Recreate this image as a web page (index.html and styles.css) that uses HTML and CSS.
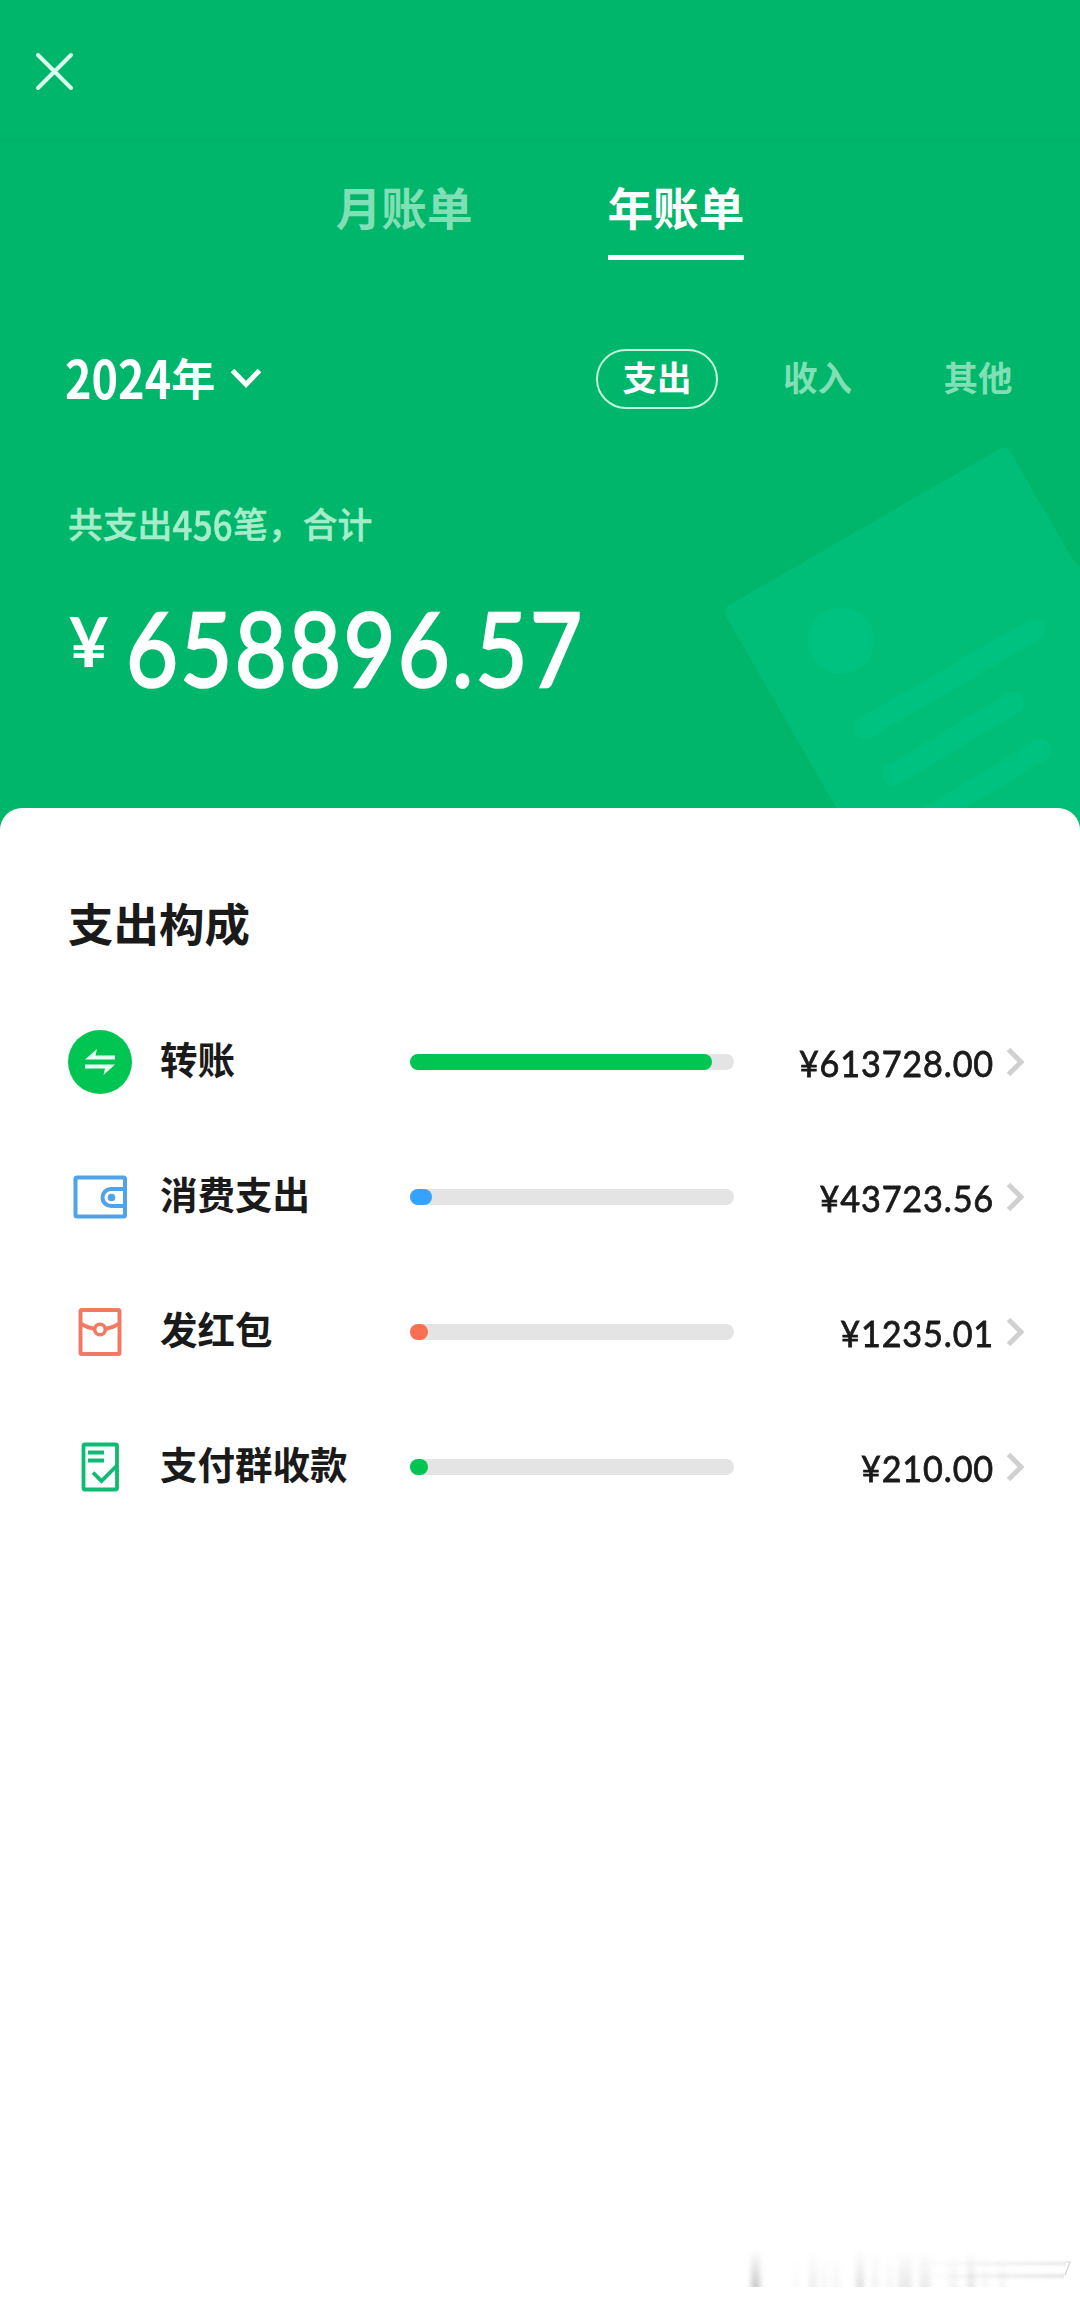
FILE: index.html
```html
<!DOCTYPE html>
<html lang="zh-CN">
<head>
    <meta charset="UTF-8">
    <title>年账单</title>
    <link rel="stylesheet" href="styles.css">
</head>
<body>
<div class="page">
    <div class="top">
        <svg class="top_bg" width="380" height="400" viewBox="700 430 380 400">
            <path fill="#00bd77" d="M729 605 L1001 448 Q1007 446 1010 451 L1073 560 L1090 577 V830 H849 L727 618 Q723 609 729 605Z"/>
            <circle cx="841" cy="640.5" r="33.5" fill="#00c280"/>
            <g stroke="#00c280" stroke-width="22" stroke-linecap="round">
                <path d="M865 728 L1034 630"/>
                <path d="M893 775 L1013 703"/>
                <path d="M930 817 L1040 750"/>
            </g>
        </svg>
        <div class="nav">
            <svg width="40" height="40" viewBox="0 0 40 40" fill="none" stroke="#d9ffef" stroke-width="4" stroke-linecap="round">
                <path d="M4 4 L37 37 M37 4 L4 37"/>
            </svg>
        </div>
        <div class="tabs">
            <div class="tab">月账单</div>
            <div class="tab tab_on">年账单</div>
        </div>
        <div class="filter">
            <div class="year">
                <span class="year_num">2024</span><span>年</span>
                <svg width="32" height="24" viewBox="0 0 32 24" fill="none" stroke="#fff" stroke-width="5">
                    <path d="M2.5 3.5 L16 17.5 L29.5 3.5"/>
                </svg>
            </div>
            <div class="types">
                <div class="type type_on">支出</div>
                <div class="type">收入</div>
                <div class="type">其他</div>
            </div>
        </div>
        <div class="count">共支出<span class="count_num">456</span>笔，合计</div>
        <div class="total"><span class="total_unit">¥</span><span class="total_num">658896.57</span></div>
    </div>

    <div class="card">
        <div class="title">支出构成</div>

        <div class="item">
            <div class="icon">
                <svg width="64" height="64" viewBox="0 0 64 64">
                    <circle cx="32" cy="32" r="32" fill="#00c553"/>
                    <path fill="#e6fff1" d="M17 29.5 L29 19 L27.5 25.5 H47 V29.5Z M47 34.5 L35.5 45 L37 38.5 H17 V34.5Z"/>
                </svg>
            </div>
            <div class="name">转账</div>
            <div class="bar"><div class="bar_in green" style="width:93.2%"></div></div>
            <div class="money">¥613728.00</div>
            <svg class="arrow" width="20" height="32" viewBox="0 0 20 32"><path d="M2.5 3.5 L15 16 L2.5 28.5"/></svg>
        </div>

        <div class="item">
            <div class="icon">
                <svg width="64" height="64" viewBox="0 0 64 64" fill="none" stroke="#4fa3e8" stroke-width="4">
                    <rect x="7.5" y="12.5" width="49.5" height="39" rx="1.5"/>
                    <path d="M57 24 H43 A8.5 8.5 0 0 0 43 41 H57"/>
                    <circle cx="43.5" cy="32.5" r="3.8" fill="#4fa3e8" stroke="none"/>
                </svg>
            </div>
            <div class="name">消费支出</div>
            <div class="bar"><div class="bar_in blue" style="width:6.8%"></div></div>
            <div class="money">¥43723.56</div>
            <svg class="arrow" width="20" height="32" viewBox="0 0 20 32"><path d="M2.5 3.5 L15 16 L2.5 28.5"/></svg>
        </div>

        <div class="item">
            <div class="icon">
                <svg width="64" height="64" viewBox="0 0 64 64" fill="none" stroke="#f27a62" stroke-width="4">
                    <rect x="12.5" y="10" width="39" height="44" rx="1.5"/>
                    <path d="M13 24 Q20 28 27 29 M51 24 Q44 28 37 29"/>
                    <circle cx="32" cy="29.5" r="5.3" stroke-width="3.6"/>
                </svg>
            </div>
            <div class="name">发红包</div>
            <div class="bar"><div class="bar_in red" style="width:0.2%"></div></div>
            <div class="money">¥1235.01</div>
            <svg class="arrow" width="20" height="32" viewBox="0 0 20 32"><path d="M2.5 3.5 L15 16 L2.5 28.5"/></svg>
        </div>

        <div class="item">
            <div class="icon">
                <svg width="64" height="64" viewBox="0 0 64 64" fill="none" stroke="#0fba73" stroke-width="3.8">
                    <rect x="15.5" y="9.5" width="33.5" height="45" rx="1.5"/>
                    <path d="M20 17.5 H36 M20 25.5 H36"/>
                    <path d="M25 37.5 L33.5 46 L49 30.5"/>
                </svg>
            </div>
            <div class="name">支付群收款</div>
            <div class="bar"><div class="bar_in green" style="width:0.03%"></div></div>
            <div class="money">¥210.00</div>
            <svg class="arrow" width="20" height="32" viewBox="0 0 20 32"><path d="M2.5 3.5 L15 16 L2.5 28.5"/></svg>
        </div>
    </div>

    <div class="foot">
        <svg width="336" height="48" viewBox="740 2245 336 48">
            <defs>
                <linearGradient id="fade" x1="0" y1="0" x2="0" y2="1">
                    <stop offset="0" stop-color="#888" stop-opacity="0"/>
                    <stop offset="1" stop-color="#888" stop-opacity="1"/>
                </linearGradient>
                <linearGradient id="fade_x" x1="0" y1="0" x2="1" y2="0">
                    <stop offset="0" stop-color="#888" stop-opacity="0"/>
                    <stop offset="1" stop-color="#888" stop-opacity=".55"/>
                </linearGradient>
                <filter id="soft" x="-10%" y="-10%" width="120%" height="120%"><feGaussianBlur stdDeviation="2.4 0"/></filter>
                <filter id="soft_y" x="-10%" y="-200%" width="120%" height="500%"><feGaussianBlur stdDeviation="0 1.6"/></filter>
            </defs>
            <g fill="url(#fade)" filter="url(#soft)">
                <rect x="751" y="2250" width="9" height="37" opacity=".45"/>
                <rect x="794" y="2258" width="4" height="29" opacity=".06"/>
                <rect x="809" y="2252" width="8" height="35" opacity=".14"/>
                <rect x="822" y="2258" width="5" height="29" opacity=".1"/>
                <rect x="832" y="2258" width="8" height="29" opacity=".08"/>
                <rect x="856" y="2250" width="8" height="37" opacity=".26"/>
                <rect x="872" y="2252" width="6" height="35" opacity=".13"/>
                <rect x="887" y="2256" width="6" height="31" opacity=".1"/>
                <rect x="898" y="2252" width="14" height="35" opacity=".18"/>
                <rect x="919" y="2252" width="12" height="35" opacity=".16"/>
                <rect x="948" y="2256" width="10" height="31" opacity=".1"/>
                <rect x="967" y="2250" width="8" height="37" opacity=".2"/>
                <rect x="982" y="2256" width="6" height="31" opacity=".08"/>
                <rect x="999" y="2256" width="6" height="31" opacity=".1"/>
            </g>
            <g fill="url(#fade_x)" filter="url(#soft_y)">
                <rect x="920" y="2262" width="146" height="3" opacity=".4"/>
                <rect x="920" y="2274" width="144" height="4" opacity=".4"/>
            </g>
            <path d="M1066 2262 L1070 2262 L1065 2275" fill="none" stroke="#d4d4d4" stroke-width="1.2"/>
        </svg>
    </div>
</div>
</body>
</html>
```
FILE: styles.css
```css
body {
    margin: 0;
    background: #fff;
    color: #1a1a1a;
    font-family: "Noto Sans CJK SC", "Noto Sans", sans-serif;
}

.page {
    position: relative;
    width: 1080px;
    height: 2298px;
    display: flex;
    flex-direction: column;
    overflow: hidden;
}

.top {
    position: relative;
    height: 808px;
    flex: none;
    background: #00b66a;
    color: #fff;
}

.top_bg {
    position: absolute;
    right: 0;
    top: 430px;
}

.nav {
    height: 141px;
    box-sizing: border-box;
    padding: 51px 0 0 34px;
    border-bottom: 1px solid #00b267;
}

.tabs {
    display: flex;
    justify-content: center;
    gap: 135px;
    padding-top: 34px;
}

.tab {
    height: 85px;
    box-sizing: border-box;
    padding-top: 1px;
    line-height: 61px;
    font-size: 45.6px;
    font-weight: 700;
    color: #80dfb4;
}

.tab_on {
    color: #fff;
    border-bottom: 5px solid #fff;
}

.filter {
    display: flex;
    align-items: center;
    justify-content: space-between;
    height: 60px;
    margin-top: 89px;
    padding: 0 41px 0 65px;
}

.year {
    display: flex;
    align-items: center;
    height: 60px;
    line-height: 54px;
    font-size: 44px;
    font-weight: 700;
    padding-bottom: 4px;
}

.year_num {
    font-size: 45px;
    transform: scaleY(1.18);
}

.year svg {
    margin: 4px 0 0 15px;
}

.types {
    display: flex;
    gap: 38.5px;
}

.type {
    width: 122px;
    height: 60px;
    box-sizing: border-box;
    border: 2px solid transparent;
    border-radius: 30px;
    line-height: 51px;
    font-size: 34.5px;
    font-weight: 700;
    text-align: center;
    color: #80dfb4;
}

.type_on {
    border-color: #c5f7e0;
    color: #fff;
}

.count {
    margin-top: 89px;
    padding-left: 68px;
    height: 50px;
    line-height: 50px;
    font-size: 34.8px;
    font-weight: 500;
    color: #a6ecca;
    -webkit-text-stroke: .5px #a6ecca;
}

.count_num {
    display: inline-block;
    letter-spacing: 0.4px;
    transform: scaleY(1.14);
}

.total {
    display: flex;
    height: 120px;
    margin-top: 40px;
    padding-left: 69px;
    font-family: Lato, "Noto Sans CJK SC", sans-serif;
    font-kerning: none;
}

.total_unit {
    width: 57px;
    line-height: 106px;
    font-size: 68px;
    font-weight: 700;
}

.total_num {
    line-height: 120px;
    font-size: 102px;
    letter-spacing: 2.6px;
    -webkit-text-stroke: 2.6px #fff;
    transform: scaleX(.88);
    transform-origin: left;
}

.card {
    position: relative;
    flex: 1;
    border-radius: 22px 22px 0 0;
    background: #fff;
    padding: 83px 54px 0 68px;
}

/* the rounded corners sit on green */
.card::before {
    content: "";
    position: absolute;
    z-index: -1;
    left: 0;
    top: 0;
    width: 100%;
    height: 22px;
    background: #00b66a;
}

.title {
    height: 62px;
    line-height: 62px;
    font-size: 45.5px;
    font-weight: 700;
    margin-bottom: 41px;
}

.item {
    display: flex;
    align-items: center;
    height: 135px;
}

.icon {
    width: 64px;
    height: 64px;
}

.name {
    width: 250px;
    margin-left: 28px;
    padding-bottom: 8px;
    font-size: 37.5px;
    font-weight: 700;
}

.bar {
    width: 324px;
    height: 16px;
    border-radius: 8px;
    background: #e4e4e4;
}

.bar_in {
    height: 16px;
    min-width: 18px;
    border-radius: 8px;
}

.green {
    background: #00c553;
}

.blue {
    background: #36a2fc;
}

.red {
    background: #fa6e51;
}

.money {
    flex: 1;
    padding-top: 2px;
    text-align: right;
    font-family: Lato, "Noto Sans CJK SC", sans-serif;
    font-size: 37px;
    font-kerning: none;
    letter-spacing: .9px;
    -webkit-text-stroke: .8px #1a1a1a;
    transform: scaleX(.925);
    transform-origin: right;
}

.arrow {
    margin-left: 12px;
    fill: none;
    stroke: #d0d0d0;
    stroke-width: 5;
}

.foot {
    position: absolute;
    right: 4px;
    bottom: 5px;
    height: 48px;
}
```
